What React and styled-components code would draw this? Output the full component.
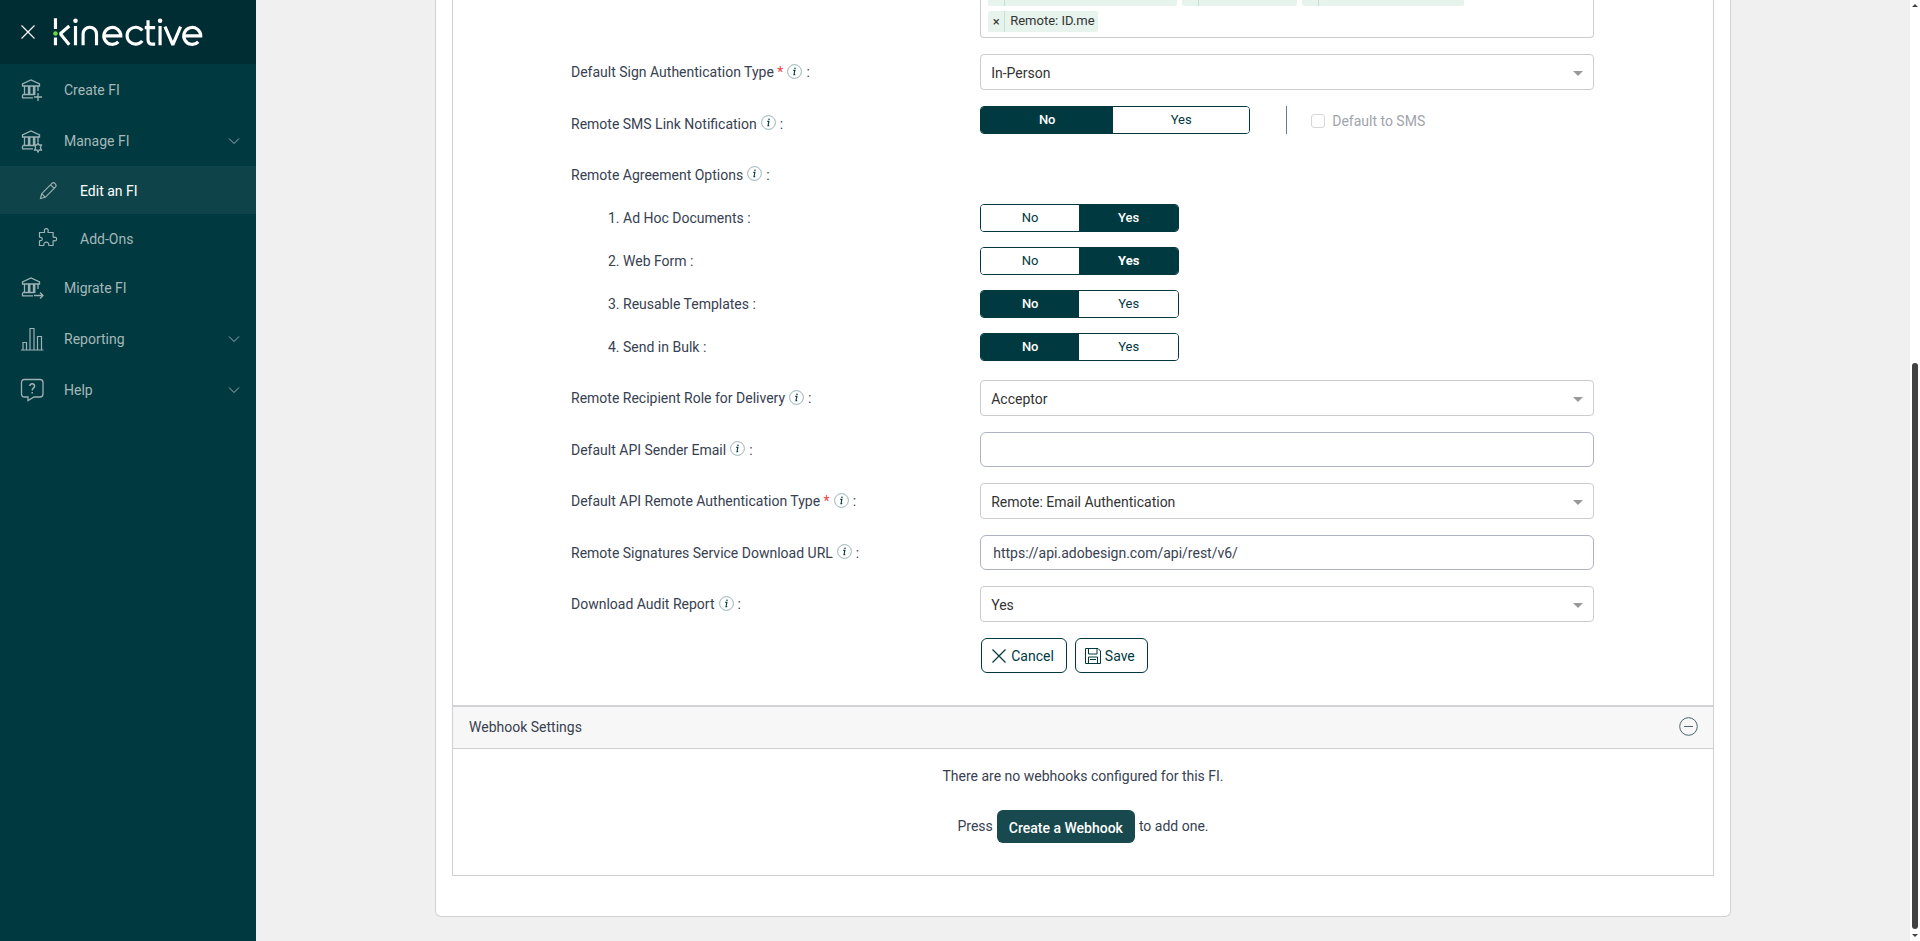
import { useState } from "react";
import styled, { createGlobalStyle } from "styled-components";

const GlobalStyle = createGlobalStyle`
  *, *::before, *::after {
    box-sizing: border-box;
  }

  body {
    margin: 0;
    background: #f0f0f0;
    color: #374151;
    font-family: Roboto, "Liberation Sans", sans-serif;
    font-size: 14px;
    line-height: 20px;
  }

  button, input, select {
    font: inherit;
  }
`;

const Layout = styled.div`
  display: flex;
  min-height: 100vh;
`;

const Sidebar = styled.aside`
  flex: 0 0 256px;
  background: #00393f;
`;

const Brand = styled.div`
  display: flex;
  align-items: center;
  gap: 17px;
  height: 64px;
  padding-left: 20px;
  background: #002c34;
`;

const IconButton = styled.button`
  display: flex;
  padding: 0;
  border: 0;
  background: none;
  color: ${(props) => props.$color || "#fff"};
  cursor: pointer;
`;

const NavLink = styled.a`
  display: flex;
  align-items: center;
  gap: 20px;
  height: ${(props) => (props.$sub ? "48px" : "51px")};
  padding: ${(props) => (props.$sub ? "2px 16px 0 36px" : "0 16px 0 20px")};
  background: ${(props) => (props.$active ? "#0e4449" : "transparent")};
  color: ${(props) => (props.$active ? "#fff" : "#a5b8ba")};
  text-decoration: none;

  > svg {
    flex: none;
    color: #9db2b5;
  }
`;

const NavText = styled.span`
  flex: 1;
`;

const Main = styled.main`
  flex: 1;
  min-width: 0;
  padding-bottom: 24px;
`;

const Card = styled.div`
  width: 100%;
  max-width: 1296px;
  margin: 0 auto;
  padding: 0 16px 40px;
  border: 1px solid #d1d1d4;
  border-top: 0;
  border-radius: 0 0 6px 6px;
  background: #fff;
`;

const Panel = styled.section`
  border: 1px solid #d1d1d4;
  border-top: 0;
`;

const Form = styled.form`
  display: flex;
  flex-direction: column;
  gap: 16px;
  padding: 0 119px 32px 118px;
`;

const Row = styled.div`
  display: grid;
  grid-template-columns: 2fr 3fr;
  align-items: ${(props) => (props.$top ? "start" : "center")};
  min-height: ${(props) => (props.$sub ? "28px" : "35px")};
`;

const Label = styled.label`
  display: flex;
  align-items: center;
  height: ${(props) => (props.$sub ? "28px" : "35px")};
  padding-left: ${(props) => (props.$sub ? "37px" : "0")};
  white-space: pre;

  svg {
    margin: 0 4px 2px 4px;
  }
`;

const Required = styled.span`
  color: #ef4444;
`;

const OptionGroup = styled.div`
  display: flex;
  flex-direction: column;
  gap: 12px;
  padding-bottom: 3px;
`;

const OptionList = styled.div`
  display: flex;
  flex-direction: column;
  gap: 15px;
`;

const TagBox = styled.div`
  display: flex;
  flex-direction: column;
  gap: 5px;
  height: 38px;
  padding: 0 7px;
  border: 1px solid #ccc;
  border-top: 0;
  border-radius: 0 0 4px 4px;
`;

const TagLine = styled.div`
  display: flex;
  gap: 5px;
`;

const Tag = styled.span`
  display: flex;
  width: ${(props) => props.$width || "auto"};
  height: ${(props) => (props.$cut ? "6px" : "21px")};
  border-radius: ${(props) => (props.$cut ? "0 0 2px 2px" : "2px")};
  background: #e6f4ed;
  color: #333;
  font-size: 13px;
  line-height: 20px;

  &::before {
    display: ${(props) => (props.$cut ? "block" : "none")};
    width: 17px;
    border-right: 1px solid #c5dfd3;
    content: "";
  }
`;

const TagRemove = styled.button`
  width: 17px;
  padding: 0;
  border: 0;
  border-right: 1px solid #c5dfd3;
  background: none;
  color: #333;
  line-height: 20px;
`;

const TagName = styled.span`
  padding: 0 3px 0 5px;
`;

const SelectWrap = styled.div`
  position: relative;

  svg {
    position: absolute;
    top: 17px;
    right: 11px;
    pointer-events: none;
  }
`;

const Select = styled.select`
  display: block;
  width: 100%;
  height: 36px;
  padding: 1px 30px 0 10px;
  border: 1px solid #ccc;
  border-radius: 4px;
  background: #fff;
  color: #333;
  appearance: none;
`;

const TextInput = styled.input`
  display: block;
  width: 100%;
  height: 35px;
  padding: 0 12px;
  border: 1px solid #adb3bf;
  border-radius: 6px;
  background: #fff;
  color: #374151;
`;

const ToggleGroup = styled.div`
  display: flex;
  width: ${(props) => (props.$wide ? "270px" : "199px")};
  height: 28px;
  overflow: hidden;
  border: 1px solid #00393f;
  border-radius: 4px;

  > :first-child {
    flex: 0 0 ${(props) => (props.$wide ? "132px" : "98px")};
  }
`;

const ToggleButton = styled.button`
  flex: 1;
  padding: 0;
  border: 0;
  background: ${(props) => (props.$on ? "#00393f" : "#fff")};
  color: ${(props) => (props.$on ? "#fff" : "#00393f")};
  font-size: 13px;
  font-weight: ${(props) => (props.$strong ? 700 : props.$on ? 500 : 400)};
  line-height: 20px;
`;

const SmsLine = styled.div`
  display: flex;
  align-items: center;
`;

const Divider = styled.span`
  width: 1px;
  height: 28px;
  margin: 0 24px 0 36px;
  background: #6b7a8c;
`;

const CheckLabel = styled.label`
  display: flex;
  align-items: center;
  gap: 7px;
  padding-top: 2px;
  color: #a0a4ab;
`;

const Checkbox = styled.input`
  width: 14px;
  height: 14px;
  margin: 0;
  border: 1px solid #d5d7da;
  border-radius: 3px;
  background: #fff;
  appearance: none;
`;

const Actions = styled.div`
  display: flex;
  grid-column: 2;
  gap: 8px;
  padding-left: 1px;
`;

const ActionButton = styled.button`
  display: flex;
  align-items: center;
  gap: 4px;
  height: 35px;
  padding: 0 12px 0 9px;
  border: 1px solid #00393f;
  border-radius: 6px;
  background: #fff;
  color: #00393f;
`;

const SectionHeader = styled.header`
  display: flex;
  align-items: center;
  justify-content: space-between;
  height: 44px;
  padding: 0 15px 2px 16px;
  border-top: 2px solid #d1d1d6;
  border-bottom: 1px solid #d1d1d4;
  background: #f7f7f7;
`;

const SectionTitle = styled.h2`
  margin: 0;
  font-size: 14px;
  font-weight: 400;
`;

const EmptyState = styled.div`
  display: flex;
  flex-direction: column;
  align-items: center;
  gap: 24px;
  padding: 17px 16px 32px;

  p {
    display: flex;
    align-items: baseline;
    gap: 4px;
    margin: 0;
  }
`;

const PrimaryButton = styled.button`
  height: 33px;
  padding: 2px 12px 0;
  border: 0;
  border-radius: 6px;
  background: #17494e;
  color: #fff;
  font-weight: 500;
`;

const PressText = styled.span`
  align-self: center;
  padding-bottom: 2px;
`;

const ScrollTrack = styled.div`
  display: flex;
  flex: 0 0 10px;
  flex-direction: column;
  align-items: center;
  justify-content: space-between;
  padding: 4px 0;
  background: #fff;
`;

const ScrollThumb = styled.div`
  width: 6px;
  height: 566px;
  margin: auto 0 5px;
  border-radius: 3px;
  background: #424242;
`;

const Logo = () => (
  <svg width="150" height="30" viewBox="0 0 152 30" fill="none" stroke="#fff" strokeWidth="3.2" role="img" aria-label="kinective">
    <path d="M2.5 1v11M2.5 20.500v8M16.500 9l-8.500 7.200v1.200L16.500 28" />
    <path d="M22.800 9v19.500M30.500 28.500V17a6.800 6.800 0 0 1 13.600 0v11.500" />
    <path d="M51.500 19h17.200a8.600 8.600 0 1 0-2.500 6" />
    <path d="M90.500 13.500a8.600 8.600 0 1 0 0 10.500" />
    <path d="M96.300 3v19.500q0 4.800 4.500 4.800h2.700M93 10.500h10.500" />
    <path d="M108.500 9v19.500M113.500 9.500l7.500 17.500h.8l7.500-17.500" />
    <path d="M133.200 19h16.500a8.600 8.600 0 1 0-2.500 6" />
    <circle cx="22.800" cy="3.500" r="2.300" fill="#fff" stroke="none" />
    <circle cx="108.500" cy="3.500" r="2.300" fill="#fff" stroke="none" />
    <circle cx="2.500" cy="16.500" r="2.300" fill="#6fd943" stroke="none" />
  </svg>
);

const BankIcon = ({ variant }) => (
  <svg width="24" height="24" viewBox="0 0 24 24" fill="none" stroke="currentColor" strokeWidth="1.300">
    <path d="M2.500 8V5.800L11 2l8.500 3.800V8z" />
    <path d="M4.500 8v9M8.500 8v9M9.800 8v9M13.500 8v9M14.800 8v9M18 8v5M2.500 16.500h12M2.500 20V17M2 19.800h11" />
    {variant === "plus" && <path d="M18 15v8M14 19h8" />}
    {variant === "arrow" && <path d="M14 19.500h9M20 16.500l3 3-3 3" />}
    {variant === "gear" && (
      <path d="M18 14l1.100 2 2.300-.1L20.400 18.500l1 2.600-2.300-.1-1.100 2-1.100-2-2.300.1 1-2.600-1-2.600 2.300.1z" />
    )}
  </svg>
);

const PencilIcon = () => (
  <svg width="24" height="24" viewBox="0 0 24 24" fill="none" stroke="currentColor" strokeWidth="1.200">
    <path d="M4.500 19.500l1.200-4.800L16.200 4.200q1.200-1 2.500.1l1 1q1 1.300-.1 2.500L9.300 18.300zM14.600 5.800l3.600 3.600M5.700 14.700l3.600 3.600" />
  </svg>
);

const PuzzleIcon = () => (
  <svg width="24" height="24" viewBox="0 0 24 24" fill="none" stroke="currentColor" strokeWidth="1.200">
    <path d="M3.500 5.500h4.600q.8 0 .5-.9C7.900 2.800 8.700 1.700 10.300 1.700s2.400 1.100 1.700 2.900q-.3.900.5.900h4.600v4.200q0 .8.900.6c1.800-.5 2.600.3 2.600 1.700s-.8 2.200-2.600 1.700q-.9-.2-.9.600v4.200h-3.700q-.8 0-.7-.8c.2-1.700-.8-2.500-2.400-2.500s-2.600.8-2.400 2.500q.1.800-.7.800H3.500v-4.200q0-.6.700-.6c1.500.1 2-.4 2-1.700s-.5-1.800-2-1.700q-.7 0-.7-.6z" />
  </svg>
);

const ChartIcon = () => (
  <svg width="24" height="24" viewBox="0 0 24 24" fill="none" stroke="currentColor" strokeWidth="1.200">
    <path d="M1 23h22.500M3 23v-7.500h3.500V23M10 23V1.500h4V23M17.500 23V9.500h4V23" />
  </svg>
);

const HelpIcon = () => (
  <svg width="24" height="24" viewBox="0 0 24 24" fill="none" stroke="currentColor" strokeWidth="1.300">
    <path d="M4.500 1.500h15.500q3 0 3 3v11.500q0 3-3 3h-6L8 22.500V19H4.500q-3 0-3-3V4.500q0-3 3-3z" />
    <path d="M9.800 8q.2-2.300 2.400-2.300T14.600 8q0 1.200-1.200 2.100T12.200 12.500M12.200 14v1.600" strokeWidth="1.500" />
  </svg>
);

const Chevron = () => (
  <svg width="12" height="12" viewBox="0 0 12 12" fill="none" stroke="currentColor">
    <path d="M1 3.500l5 5 5-5" />
  </svg>
);

const CloseIcon = () => (
  <svg width="16" height="16" viewBox="0 0 16 16" fill="none" stroke="currentColor" strokeWidth="1.200">
    <path d="M1.500 1.500l13 13M14.500 1.500l-13 13" />
  </svg>
);

const SaveIcon = () => (
  <svg width="16" height="16" viewBox="0 0 16 16" fill="none" stroke="currentColor">
    <path d="M.5.5h12.500L15.500 3v12.500H.5zM3.500.5v5.500h8.500V.5M3.500 15.500V9h9v6.500M5 11.500h6" />
  </svg>
);

const InfoIcon = () => (
  <svg width="15" height="15" viewBox="0 0 15 15" fill="none">
    <circle cx="7.500" cy="7.500" r="6.900" stroke="#7d9ea3" strokeWidth=".8" />
    <path d="M6.300 6.400h1.600l-.9 4.200h1.200" stroke="#00393f" strokeWidth="1.100" />
    <circle cx="8" cy="4.300" r=".8" fill="#00393f" />
  </svg>
);

const MinusIcon = () => (
  <svg width="19" height="19" viewBox="0 0 19 19" fill="none" stroke="currentColor">
    <circle cx="9.500" cy="9.500" r="8.800" />
    <path d="M5 9.500h9" />
  </svg>
);

const Arrow = () => (
  <svg width="10" height="5" viewBox="0 0 10 5" fill="#999">
    <path d="M0 0h10L5 5z" />
  </svg>
);

const navItems = [
  { name: "Create FI", icon: <BankIcon variant="plus" /> },
  { name: "Manage FI", icon: <BankIcon variant="gear" />, open: true },
  { name: "Edit an FI", icon: <PencilIcon />, sub: true, active: true },
  { name: "Add-Ons", icon: <PuzzleIcon />, sub: true },
  { name: "Migrate FI", icon: <BankIcon variant="arrow" /> },
  { name: "Reporting", icon: <ChartIcon />, open: true },
  { name: "Help", icon: <HelpIcon />, open: true },
];

const agreementOptions = [
  { name: "1. Ad Hoc Documents", value: "Yes" },
  { name: "2. Web Form", value: "Yes", strong: true },
  { name: "3. Reusable Templates", value: "No" },
  { name: "4. Send in Bulk", value: "No" },
];

const FieldLabel = ({ id, text, required }) => (
  <Label htmlFor={id}>
    {text}
    {required && <Required> *</Required>}
    <InfoIcon />
    {":"}
  </Label>
);

const SelectField = ({ id, text, required, value }) => (
  <Row>
    <FieldLabel id={id} text={text} required={required} />
    <SelectWrap>
      <Select id={id} defaultValue={value}>
        <option>{value}</option>
      </Select>
      <Arrow />
    </SelectWrap>
  </Row>
);

const InputField = ({ id, text, value }) => (
  <Row>
    <FieldLabel id={id} text={text} />
    <TextInput id={id} type="text" defaultValue={value} />
  </Row>
);

const Toggle = ({ id, label, initial, wide, strong }) => {
  const [value, setValue] = useState(initial);

  return (
    <ToggleGroup role="group" aria-label={label} $wide={wide}>
      {["No", "Yes"].map((option) => (
        <ToggleButton
          key={option}
          id={option === "No" ? id : undefined}
          type="button"
          aria-pressed={value === option}
          $on={value === option}
          $strong={strong && value === option}
          onClick={() => setValue(option)}
        >
          {option}
        </ToggleButton>
      ))}
    </ToggleGroup>
  );
};

const App = () => {
  return (
    <>
      <GlobalStyle />
      <Layout>
        <Sidebar>
          <Brand>
            <IconButton type="button" aria-label="Close menu">
              <CloseIcon />
            </IconButton>
            <Logo />
          </Brand>
          <nav>
            {navItems.map((item) => (
              <NavLink key={item.name} href="#" $sub={item.sub} $active={item.active}>
                {item.icon}
                <NavText>{item.name}</NavText>
                {item.open && <Chevron />}
              </NavLink>
            ))}
          </nav>
        </Sidebar>
        <Main>
          <Card>
            <Panel>
              <Form onSubmit={(e) => e.preventDefault()}>
                <Row $top>
                  <span />
                  <TagBox>
                    <TagLine>
                      <Tag $cut $width="189px" />
                      <Tag $cut $width="115px" />
                      <Tag $cut $width="162px" />
                    </TagLine>
                    <TagLine>
                      <Tag>
                        <TagRemove type="button">×</TagRemove>
                        <TagName>Remote: ID.me</TagName>
                      </Tag>
                    </TagLine>
                  </TagBox>
                </Row>
                <SelectField id="signAuth" text="Default Sign Authentication Type" required value="In-Person" />
                <Row $top>
                  <FieldLabel id="smsLink" text="Remote SMS Link Notification" />
                  <SmsLine>
                    <Toggle id="smsLink" label="Remote SMS Link Notification" initial="No" wide />
                    <Divider />
                    <CheckLabel>
                      <Checkbox type="checkbox" disabled />
                      Default to SMS
                    </CheckLabel>
                  </SmsLine>
                </Row>
                <OptionGroup>
                  <Row>
                    <FieldLabel text="Remote Agreement Options" />
                  </Row>
                  <OptionList>
                    {agreementOptions.map((option, i) => (
                      <Row key={option.name} $sub>
                        <Label htmlFor={`agreement${i}`} $sub>
                          {option.name} :
                        </Label>
                        <Toggle
                          id={`agreement${i}`}
                          label={option.name}
                          initial={option.value}
                          strong={option.strong}
                        />
                      </Row>
                    ))}
                  </OptionList>
                </OptionGroup>
                <SelectField id="recipientRole" text="Remote Recipient Role for Delivery" value="Acceptor" />
                <InputField id="senderEmail" text="Default API Sender Email" value="" />
                <SelectField
                  id="apiAuth"
                  text="Default API Remote Authentication Type"
                  required
                  value="Remote: Email Authentication"
                />
                <InputField
                  id="downloadUrl"
                  text="Remote Signatures Service Download URL"
                  value="https://api.adobesign.com/api/rest/v6/"
                />
                <SelectField id="auditReport" text="Download Audit Report" value="Yes" />
                <Row>
                  <Actions>
                    <ActionButton type="button">
                      <CloseIcon />
                      Cancel
                    </ActionButton>
                    <ActionButton type="submit">
                      <SaveIcon />
                      Save
                    </ActionButton>
                  </Actions>
                </Row>
              </Form>
              <SectionHeader>
                <SectionTitle>Webhook Settings</SectionTitle>
                <IconButton type="button" aria-label="Collapse" $color="#4b6470">
                  <MinusIcon />
                </IconButton>
              </SectionHeader>
              <EmptyState>
                <p>There are no webhooks configured for this FI.</p>
                <p>
                  <PressText>Press</PressText>
                  <PrimaryButton type="button">Create a Webhook</PrimaryButton>
                  <PressText>to add one.</PressText>
                </p>
              </EmptyState>
            </Panel>
          </Card>
        </Main>
        <ScrollTrack aria-hidden="true">
          <svg width="6" height="3" viewBox="0 0 6 3" fill="#424242">
            <path d="M0 3h6L3 0z" />
          </svg>
          <ScrollThumb />
          <svg width="6" height="3" viewBox="0 0 6 3" fill="#424242">
            <path d="M0 0h6L3 3z" />
          </svg>
        </ScrollTrack>
      </Layout>
    </>
  );
};

export default App;
